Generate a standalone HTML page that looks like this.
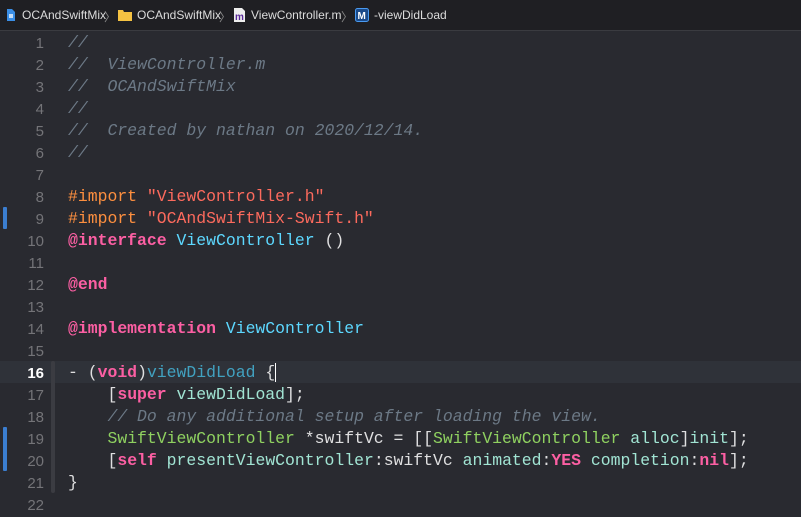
<!DOCTYPE html>
<html><head><style>
body{margin:0;width:801px;height:510px;background:#292a30;overflow:hidden;font-family:"Liberation Mono",monospace;}
.bar{position:absolute;left:0;top:0;width:801px;height:30px;background:#1f1f23;border-bottom:1px solid #3a3b40;font-family:"Liberation Sans",sans-serif;font-size:12px;color:#dcdcdc;}
.bar span{position:absolute;top:8px;}
.hl{position:absolute;left:0;top:361px;width:801px;height:22px;background:#2f3239;}
.mark{position:absolute;left:3px;width:4px;background:#3b7ed0;border-radius:1px;}
.ln{position:absolute;left:0;width:44px;text-align:right;font-size:15px;color:#747478;font-family:"Liberation Sans",sans-serif;}
.code{position:absolute;left:68px;font-size:16.45px;color:#dfdfe0;white-space:pre;}
.c{color:#6c7986;font-style:italic}.p{color:#fd8f3f}.s{color:#fc6a5d}.k{color:#fc5fa3;font-weight:bold}.t{color:#5dd8ff}.g{color:#8fd160}.f{color:#41a1c0}.m{color:#a1e4d3}
</style></head><body>
<div class="bar">
<svg style="position:absolute;left:6px;top:8px" width="10" height="14"><path d="M1 1h5l3 3v9H1z" fill="#3a8ee6"/><rect x="3" y="6" width="4" height="4" fill="#fff" opacity=".7"/></svg>
<span style="left:22px">OCAndSwiftMix</span><span style="left:104px;color:#888">〉</span>
<svg style="position:absolute;left:118px;top:9px" width="14" height="12"><path d="M0 1h5l1 2h8v9H0z" fill="#f5c242"/></svg>
<span style="left:137px">OCAndSwiftMix</span><span style="left:219px;color:#888">〉</span>
<svg style="position:absolute;left:234px;top:8px" width="11" height="14"><path d="M0 0h8l3 3v11H0z" fill="#eee"/><text x="1" y="12" font-size="10" font-weight="bold" fill="#5a2a9a" font-family="Liberation Sans">m</text></svg>
<span style="left:251px">ViewController.m</span><span style="left:341px;color:#888">〉</span>
<svg style="position:absolute;left:355px;top:8px" width="14" height="14"><rect x=".5" y=".5" width="13" height="13" rx="2" fill="#1a4a8a" stroke="#4a9af0"/><text x="2.5" y="11" font-size="10" font-weight="bold" fill="#fff" font-family="Liberation Sans">M</text></svg>
<span style="left:374px">-viewDidLoad</span>
</div>
<div class="hl"></div>
<div class="mark" style="top:207px;height:22px"></div>
<div class="mark" style="top:427px;height:44px"></div>
<div style="position:absolute;left:51px;top:361px;width:4px;height:132px;background:#3b3c42;border-radius:2px"></div>
<div class="ln" style="top:33px;line-height:22px">1<br>2<br>3<br>4<br>5<br>6<br>7<br>8<br>9<br>10<br>11<br>12<br>13<br>14<br>15<br><b style="color:#fff">16</b><br>17<br>18<br>19<br>20<br>21<br>22</div>
<div class="code" style="top:32px;line-height:22px"><span class="c">//
//  ViewController.m
//  OCAndSwiftMix
//
//  Created by nathan on 2020/12/14.
//</span>

<span class="p">#import </span><span class="s">"ViewController.h"</span>
<span class="p">#import </span><span class="s">"OCAndSwiftMix-Swift.h"</span>
<span class="k">@interface</span> <span class="t">ViewController</span> ()

<span class="k">@end</span>

<span class="k">@implementation</span> <span class="t">ViewController</span>

- (<span class="k">void</span>)<span class="f">viewDidLoad</span> {<span style="border-left:1px solid #fff"></span>
    [<span class="k">super</span> <span class="m">viewDidLoad</span>];
    <span class="c">// Do any additional setup after loading the view.</span>
    <span class="g">SwiftViewController</span> *swiftVc = [[<span class="g">SwiftViewController</span> <span class="m">alloc</span>]<span class="m">init</span>];
    [<span class="k">self</span> <span class="m">presentViewController</span>:swiftVc <span class="m">animated</span>:<span class="k">YES</span> <span class="m">completion</span>:<span class="k">nil</span>];
}
</div>
</body></html>
